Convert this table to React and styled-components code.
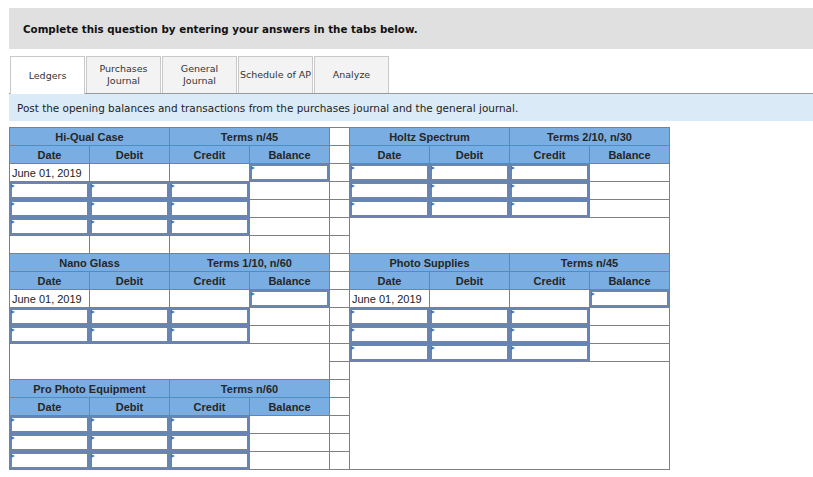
import React from "react";
import styled, { createGlobalStyle } from "styled-components";

const GlobalStyle = createGlobalStyle`
  html, body {
    margin: 0;
    padding: 0;
    background: #ffffff;
  }
  body {
    font-family: "DejaVu Sans", Verdana, sans-serif;
    color: #222;
  }
`;

const Page = styled.div`
  padding: 8px 0 0 9px;
  width: 804px;
`;

const Banner = styled.div`
  height: 41px;
  background-color: #e0e0e0;
  display: flex;
  align-items: center;
  padding-left: 14px;
  font-size: 10.3px;
  font-weight: bold;
  color: #111;
`;

const TabBar = styled.div`
  display: flex;
  align-items: flex-end;
  gap: 1px;
  margin-top: 7px;
  padding-left: 1px;
  border-bottom: 1px solid #999;
  height: 37px;
`;

const Tab = styled.div`
  width: 75px;
  box-sizing: border-box;
  display: flex;
  align-items: center;
  justify-content: center;
  text-align: center;
  font-size: 9.5px;
  line-height: 12px;
  color: #333;
  border: 1px solid #c9c9c9;
  border-bottom: none;
  background-color: ${(p) => (p.$active ? "#ffffff" : "#f3f3f3")};
  margin-bottom: ${(p) => (p.$active ? "-1px" : "0")};
  height: ${(p) => (p.$active ? "38px" : "37px")};
`;

const Instruction = styled.div`
  height: 27px;
  background-color: #dbeaf7;
  display: flex;
  align-items: center;
  padding-left: 8px;
  font-size: 10.45px;
  color: #222;
`;

const Ledger = styled.table`
  margin-top: 6px;
  border-collapse: collapse;
  table-layout: fixed;
  width: 660px;
  font-family: "Liberation Sans", Arial, sans-serif;
  font-size: 11px;
  color: #222;
`;

const Cell = styled.td`
  height: 18px;
  padding: 0;
  border: 1px solid #808080;
  box-sizing: border-box;
  vertical-align: middle;
  white-space: nowrap;
  overflow: hidden;
`;

const Head = styled(Cell)`
  background-color: #7aade2;
  font-weight: bold;
  color: #262626;
  text-align: center;
`;

const DateText = styled(Cell)`
  padding-left: 2px;
`;

const Blank = styled(Cell)`
  vertical-align: top;
`;

const FieldCell = styled(Cell)`
  padding: 0;
`;

const Field = styled.div`
  position: relative;
  height: 17px;
  &::before {
    content: "";
    position: absolute;
    left: 1px;
    top: 2px;
    border-top: 2px solid transparent;
    border-bottom: 2px solid transparent;
    border-left: 4px solid #3a78c9;
  }
`;

const FieldInput = styled.input`
  display: block;
  width: 100%;
  height: 100%;
  box-sizing: border-box;
  margin: 0;
  border: 2px solid #6886b3;
  background: #ffffff;
  outline: none;
  padding: 0 3px;
  font: inherit;
`;

const Input = () => (
  <FieldCell>
    <Field>
      <FieldInput type="text" aria-label="entry" />
    </Field>
  </FieldCell>
);

const Gap = () => <Cell />;

const Title = ({ name, terms }) => (
  <>
    <Head colSpan={2}>{name}</Head>
    <Head colSpan={2}>{terms}</Head>
  </>
);

const Columns = () => (
  <>
    <Head>Date</Head>
    <Head>Debit</Head>
    <Head>Credit</Head>
    <Head>Balance</Head>
  </>
);

const OpeningRow = () => (
  <>
    <DateText>June 01, 2019</DateText>
    <Cell />
    <Cell />
    <Input />
  </>
);

const EntryRow = () => (
  <>
    <Input />
    <Input />
    <Input />
    <Cell />
  </>
);

const EmptyRow = () => (
  <>
    <Cell />
    <Cell />
    <Cell />
    <Cell />
  </>
);

const App = () => {
  const tabs = [
    "Ledgers",
    "Purchases\nJournal",
    "General\nJournal",
    "Schedule of AP",
    "Analyze",
  ];

  return (
    <Page>
      <GlobalStyle />
      <Banner>Complete this question by entering your answers in the tabs below.</Banner>
      <TabBar>
        {tabs.map((t, i) => (
          <Tab key={t} $active={i === 0}>
            <span>
              {t.split("\n").map((line, j) => (
                <React.Fragment key={j}>
                  {j > 0 && <br />}
                  {line}
                </React.Fragment>
              ))}
            </span>
          </Tab>
        ))}
      </TabBar>
      <Instruction>
        Post the opening balances and transactions from the purchases journal and the general journal.
      </Instruction>
      <Ledger>
        <colgroup>
          <col style={{ width: 80 }} />
          <col style={{ width: 80 }} />
          <col style={{ width: 80 }} />
          <col style={{ width: 80 }} />
          <col style={{ width: 20 }} />
          <col style={{ width: 80 }} />
          <col style={{ width: 80 }} />
          <col style={{ width: 80 }} />
          <col style={{ width: 80 }} />
        </colgroup>
        <tbody>
          <tr>
            <Title name="Hi-Qual Case" terms="Terms n/45" />
            <Gap />
            <Title name="Holtz Spectrum" terms="Terms 2/10, n/30" />
          </tr>
          <tr>
            <Columns />
            <Gap />
            <Columns />
          </tr>
          <tr>
            <OpeningRow />
            <Gap />
            <EntryRow />
          </tr>
          <tr>
            <EntryRow />
            <Gap />
            <EntryRow />
          </tr>
          <tr>
            <EntryRow />
            <Gap />
            <EntryRow />
          </tr>
          <tr>
            <EntryRow />
            <Gap />
            <Blank colSpan={4} rowSpan={2} />
          </tr>
          <tr>
            <EmptyRow />
            <Gap />
          </tr>
          <tr>
            <Title name="Nano Glass" terms="Terms 1/10, n/60" />
            <Gap />
            <Title name="Photo Supplies" terms="Terms n/45" />
          </tr>
          <tr>
            <Columns />
            <Gap />
            <Columns />
          </tr>
          <tr>
            <OpeningRow />
            <Gap />
            <OpeningRow />
          </tr>
          <tr>
            <EntryRow />
            <Gap />
            <EntryRow />
          </tr>
          <tr>
            <EntryRow />
            <Gap />
            <EntryRow />
          </tr>
          <tr>
            <Blank colSpan={4} rowSpan={2} />
            <Gap />
            <EntryRow />
          </tr>
          <tr>
            <Gap />
            <Blank colSpan={4} rowSpan={6} />
          </tr>
          <tr>
            <Title name="Pro Photo Equipment" terms="Terms n/60" />
            <Gap />
          </tr>
          <tr>
            <Columns />
            <Gap />
          </tr>
          <tr>
            <EntryRow />
            <Gap />
          </tr>
          <tr>
            <EntryRow />
            <Gap />
          </tr>
          <tr>
            <EntryRow />
            <Gap />
          </tr>
        </tbody>
      </Ledger>
    </Page>
  );
};

export default App;
